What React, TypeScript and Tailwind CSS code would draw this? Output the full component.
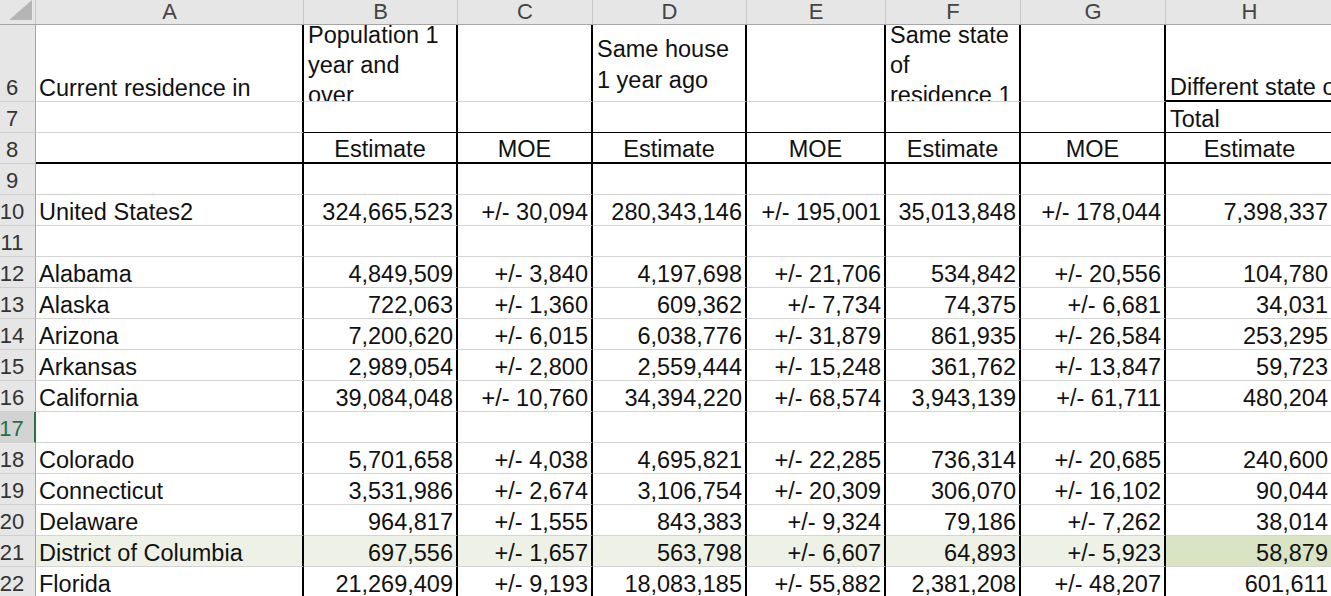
const W = [
  'w-[36px]',
  'w-[268px]',
  'w-[154px]',
  'w-[135px]',
  'w-[154px]',
  'w-[139px]',
  'w-[135px]',
  'w-[145px]',
  'w-[168px]',
]

const LETTERS = ['A', 'B', 'C', 'D', 'E', 'F', 'G', 'H']

type DataRow = { n: number; cells?: string[] }

const rows: DataRow[] = [
  { n: 9 },
  { n: 10, cells: ['United States2', '324,665,523', '+/- 30,094', '280,343,146', '+/- 195,001', '35,013,848', '+/- 178,044', '7,398,337'] },
  { n: 11 },
  { n: 12, cells: ['Alabama', '4,849,509', '+/- 3,840', '4,197,698', '+/- 21,706', '534,842', '+/- 20,556', '104,780'] },
  { n: 13, cells: ['Alaska', '722,063', '+/- 1,360', '609,362', '+/- 7,734', '74,375', '+/- 6,681', '34,031'] },
  { n: 14, cells: ['Arizona', '7,200,620', '+/- 6,015', '6,038,776', '+/- 31,879', '861,935', '+/- 26,584', '253,295'] },
  { n: 15, cells: ['Arkansas', '2,989,054', '+/- 2,800', '2,559,444', '+/- 15,248', '361,762', '+/- 13,847', '59,723'] },
  { n: 16, cells: ['California', '39,084,048', '+/- 10,760', '34,394,220', '+/- 68,574', '3,943,139', '+/- 61,711', '480,204'] },
  { n: 17 },
  { n: 18, cells: ['Colorado', '5,701,658', '+/- 4,038', '4,695,821', '+/- 22,285', '736,314', '+/- 20,685', '240,600'] },
  { n: 19, cells: ['Connecticut', '3,531,986', '+/- 2,674', '3,106,754', '+/- 20,309', '306,070', '+/- 16,102', '90,044'] },
  { n: 20, cells: ['Delaware', '964,817', '+/- 1,555', '843,383', '+/- 9,324', '79,186', '+/- 7,262', '38,014'] },
  { n: 21, cells: ['District of Columbia', '697,556', '+/- 1,657', '563,798', '+/- 6,607', '64,893', '+/- 5,923', '58,879'] },
  { n: 22, cells: ['Florida', '21,269,409', '+/- 9,193', '18,083,185', '+/- 55,882', '2,381,208', '+/- 48,207', '601,611'] },
]

// right edge of a data column: thick black for A..G, plain gridline for H
function rightBorder(i: number) {
  return i < 8 ? 'border-r-2 border-r-black' : 'border-r border-r-[#d4d4d4]'
}

function RowHeader({ n, selected }: { n: number; selected?: boolean }) {
  return (
    <div
      className={`${W[0]} shrink-0 flex items-end justify-center pr-[11px] text-[22px] leading-[26px] border-b border-b-[#cfcfcf] ${
        selected ? 'bg-[#d3d3d3] text-[#217346] border-r-2 border-r-[#217346]' : 'bg-[#e6e6e6] text-[#333] border-r border-r-[#a6a6a6]'
      }`}
    >
      {n}
    </div>
  )
}

function ColumnHeaders() {
  return (
    <div className="relative z-10 flex h-[25px] bg-[#e6e6e6] border-b border-b-[#a6a6a6]">
      <div className={`${W[0]} shrink-0 flex justify-end items-start pr-[3px] border-r border-r-[#c9c9c9]`}>
        <svg width="23" height="20" viewBox="0 0 23 20">
          <polygon points="0,20 23,20 23,0" fill="#b5b5b5" />
        </svg>
      </div>
      {LETTERS.map((l, i) => (
        <div
          key={l}
          className={`${W[i + 1]} shrink-0 flex items-center justify-center text-[22px] leading-none text-[#444] border-r border-r-[#c9c9c9]`}
        >
          {l}
        </div>
      ))}
    </div>
  )
}

// wrapped title cell in row 6; the text overflows the cell and is clipped
function WrapHead({ i, text, pad = 'pr-[4px]', inner = '' }: { i: number; text?: string; pad?: string; inner?: string }) {
  return (
    <div className={`${W[i]} shrink-0 overflow-hidden pl-[4px] border-b border-b-[#d4d4d4] ${pad} ${rightBorder(i)}`}>
      {text && <div className={inner}>{text}</div>}
    </div>
  )
}

export default function App() {
  return (
    <div className="w-[1331px] h-[596px] overflow-hidden bg-white text-[#111] font-['Liberation_Sans',Arial,sans-serif] text-[23.5px]">
      <ColumnHeaders />

      {/* row 6: titles */}
      <div className="flex h-[77px]">
        <RowHeader n={6} />
        <div className={`${W[1]} shrink-0 flex items-end pl-[3px] leading-[26px] border-b border-b-[#d4d4d4] ${rightBorder(1)}`}>
          Current residence in
        </div>
        <WrapHead i={2} text="Population 1 year and over" pad="pr-[9px]" inner="-mt-[5px] leading-[30px]" />
        <WrapHead i={3} />
        <WrapHead i={4} text="Same house 1 year ago" inner="mt-[9px] leading-[31px]" />
        <WrapHead i={5} />
        <WrapHead i={6} text="Same state of residence 1 year ago" pad="pr-[2px]" inner="-mt-[5px] leading-[30px]" />
        <WrapHead i={7} />
        <div className={`${W[8]} shrink-0 flex items-end pl-[4px] leading-[26px] whitespace-nowrap border-b-2 border-b-black ${rightBorder(8)}`}>
          Different state of residence 1 year ago
        </div>
      </div>

      {/* row 7 */}
      <div className="flex h-[31px]">
        <RowHeader n={7} />
        {[1, 2, 3, 4, 5, 6, 7, 8].map((i) => (
          <div
            key={i}
            className={`${W[i]} shrink-0 flex items-end pl-[4px] leading-[26px] ${
              i === 1 ? 'border-b border-b-[#d4d4d4]' : 'border-b border-b-black'
            } ${rightBorder(i)}`}
          >
            {i === 8 ? 'Total' : ''}
          </div>
        ))}
      </div>

      {/* row 8 */}
      <div className="flex h-[31px]">
        <RowHeader n={8} />
        {[1, 2, 3, 4, 5, 6, 7, 8].map((i) => (
          <div
            key={i}
            className={`${W[i]} shrink-0 flex items-end justify-center leading-[26px] border-b-2 border-b-black ${rightBorder(i)}`}
          >
            {i === 1 ? '' : i % 2 === 0 || i === 8 ? 'Estimate' : 'MOE'}
          </div>
        ))}
      </div>

      {rows.map((r) => {
        const hl = r.n === 21
        return (
          <div key={r.n} className="flex h-[31px]">
            <RowHeader n={r.n} selected={r.n === 17} />
            {[1, 2, 3, 4, 5, 6, 7, 8].map((i) => (
              <div
                key={i}
                className={`${W[i]} shrink-0 flex items-end leading-[26px] whitespace-nowrap border-b border-b-[#d4d4d4] ${rightBorder(i)} ${
                  i === 1 ? 'pl-[3px]' : i === 8 ? 'justify-end pr-[5px]' : 'justify-end pr-[3px]'
                } ${hl ? (i === 8 ? 'bg-[#d9e4c4]' : 'bg-[#eef2e6]') : ''}`}
              >
                {r.cells ? r.cells[i - 1] : ''}
              </div>
            ))}
          </div>
        )
      })}
    </div>
  )
}
